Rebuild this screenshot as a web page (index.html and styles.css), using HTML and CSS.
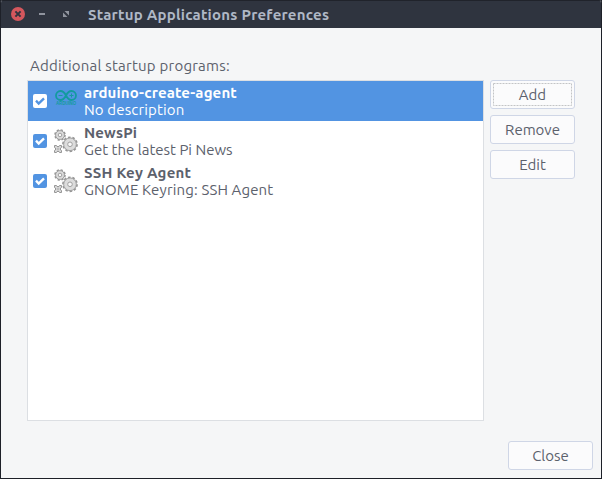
FILE: index.html
```html
<!DOCTYPE html>
<html lang="en">
<head>
<meta charset="utf-8">
<title>Startup Applications Preferences</title>
<link rel="stylesheet" href="styles.css">
</head>
<body>
<svg class="defs" aria-hidden="true">
  <symbol id="gears" viewBox="0 0 24 24">
    <g fill="#dcdcdc" stroke="#969696">
      <circle cx="6" cy="6" r="5" stroke-width="1.6" stroke-dasharray="2.2 1.727"/>
      <circle cx="6" cy="6" r="4.400" stroke-width=".8"/>
      <circle cx="16" cy="15.300" r="7.100" stroke-width="1.6" stroke-dasharray="2.500 1.961"/>
      <circle cx="16" cy="15.300" r="6.300" stroke-width=".8"/>
      <path d="M.5 16.500h2l.5 1h2l.5-1h2v2l-1 .5v2l1 .5v2h-2l-.5-1h-2l-.5 1h-2v-2l1-.5v-2l-1-.5z" stroke-width="1"/>
    </g>
    <g fill="#f8f8f8" stroke="#a0a0a0">
      <circle cx="6" cy="6" r="1.800"/>
      <circle cx="16" cy="15.300" r="2.300"/>
      <circle cx="4" cy="20" r="1" stroke-width=".8"/>
    </g>
  </symbol>
  <symbol id="tick" viewBox="0 0 14 14"><path d="M3 6.700l2.700 2.800 5.300-5.200" fill="none" stroke="currentColor" stroke-width="2.4"/></symbol>
</svg>
<div class="window">
  <header class="titlebar">
    <svg class="controls" viewBox="0 0 76 28">
      <circle cx="18" cy="13" r="7" fill="#d4575d"/>
      <path d="M15.400 10.400l5.200 5.200m0-5.200l-5.200 5.200" stroke="#2f343f" stroke-width="2"/>
      <path d="M39 13h6" stroke="#90949e" stroke-width="2"/>
      <path d="M64.500 10H69v4.500zM63 11.500V16h4.500z" fill="#90949e"/>
    </svg>
    <h1 class="title">Startup Applications Preferences</h1>
  </header>
  <main class="content">
    <p class="label">Additional startup programs:</p>
    <div class="panel">
      <ul class="list">
        <li class="row selected">
          <span class="check"><svg><use href="#tick"/></svg></span>
          <svg class="icon" viewBox="0 0 24 24">
            <path d="M12 6.500C10.500 3.500 8.800 2 6.500 2a4.500 4.500 0 0 0 0 9C8.800 11 10.500 9.500 12 6.500s3.200-4.500 5.500-4.500a4.500 4.500 0 0 1 0 9C15.200 11 13.500 9.500 12 6.500z" fill="none" stroke="#139b9f" stroke-width="1.8"/>
            <path d="M4.500 6.500h4M15.500 6.500h4M17.500 4.500v4" stroke="#139b9f"/>
            <text class="brand" x="2" y="16" textLength="20" lengthAdjust="spacingAndGlyphs">ARDUINO</text>
          </svg>
          <div class="text"><b class="name">arduino-create-agent</b><span class="description">No description</span></div>
        </li>
        <li class="row">
          <span class="check"><svg><use href="#tick"/></svg></span>
          <svg class="icon"><use href="#gears"/></svg>
          <div class="text"><b class="name">NewsPi</b><span class="description tight">Get the latest Pi News</span></div>
        </li>
        <li class="row">
          <span class="check"><svg><use href="#tick"/></svg></span>
          <svg class="icon"><use href="#gears"/></svg>
          <div class="text"><b class="name loose">SSH Key Agent</b><span class="description">GNOME Keyring: SSH Agent</span></div>
        </li>
      </ul>
      <div class="actions">
        <button class="button focused">Add<svg class="focus-ring"><rect x=".5" y=".5" width="78" height="22"/></svg></button>
        <button class="button">Remove</button>
        <button class="button">Edit</button>
      </div>
    </div>
    <footer class="footer"><button class="button">Close</button></footer>
  </main>
</div>
</body>
</html>
```
FILE: styles.css
```css
* { box-sizing: border-box; }
body {
  margin: 0;
  background: #20242d;
  font-family: Ubuntu, "Noto Sans", sans-serif;
  font-size: 15px;
  color: #5c616c;
}
.defs { position: absolute; width: 0; height: 0; }
.window {
  width: 602px;
  height: 479px;
  border: 1px solid #1d2028;
  border-top: 0;
  border-radius: 3px 3px 0 0;
  background: #f5f6f7;
  overflow: hidden;
}
.titlebar {
  display: flex;
  align-items: center;
  height: 28px;
  background: #2f343f;
  border-top: 1px solid #20232b;
}
.controls { width: 76px; height: 28px; margin-left: -1px; flex: none; }
.title {
  margin: 0 0 0 12px;
  font-size: 15px;
  font-weight: 700;
  line-height: 20px;
  letter-spacing: .24px;
  color: #afb8c6;
  white-space: nowrap;
}
.content { padding: 28px 8px 8px 26px; }
.label { margin: 0 0 4px 3px; line-height: 20px; letter-spacing: .22px; }
.panel { display: flex; gap: 6px; }
.list {
  list-style: none;
  margin: 0;
  padding: 0;
  width: 457px;
  height: 341px;
  background: #fff;
  border: 1px solid #dcdfe3;
}
.row { display: flex; align-items: center; height: 40px; padding-left: 5px; }
.selected { background: #5294e2; color: #fff; }
.check {
  width: 14px;
  height: 14px;
  border-radius: 2px;
  background: #5294e2;
  color: #fff;
}
.check svg { display: block; width: 14px; height: 14px; }
.selected .check { background: #fff; color: #5294e2; }
.icon { width: 24px; height: 24px; margin: 0 6px 0 7px; flex: none; }
.brand { font: 700 5px "Liberation Sans", sans-serif; fill: #139b9f; }
.text { display: flex; flex-direction: column; line-height: 17px; white-space: nowrap; align-items: flex-start; }
.name, .description { letter-spacing: .14px; }
.loose { letter-spacing: .23px; }
.tight { letter-spacing: 0; }
.actions { display: flex; flex-direction: column; gap: 6px; }
.button {
  width: 85px;
  height: 29px;
  padding: 0;
  border: 1px solid #cfd6e6;
  border-radius: 3px;
  background: #fbfbfc;
  font: inherit;
  line-height: 20px;
  color: #5c616c;
}
.focused { position: relative; }
.focus-ring { position: absolute; left: 2px; top: 2px; width: 79px; height: 23px; }
.focus-ring rect { fill: none; stroke: #c3c4c6; stroke-dasharray: 2 1; }
.footer { display: flex; justify-content: flex-end; margin-top: 20px; }
```
